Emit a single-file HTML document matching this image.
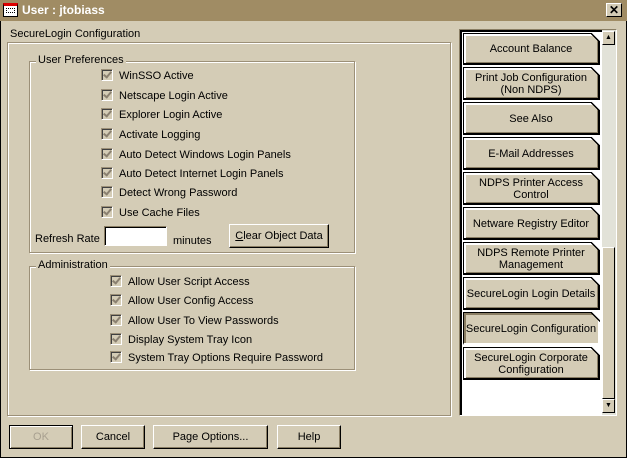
<!DOCTYPE html>
<html><head><style>
*{margin:0;padding:0;box-sizing:border-box}
body{width:627px;height:458px;background:#d4ccb6;font-family:"Liberation Sans",sans-serif;font-size:11px;color:#000;position:relative;overflow:hidden}
.a{position:absolute;white-space:nowrap}
.t{padding-top:1px}
.win{position:absolute;left:0;top:0;width:627px;height:458px;border:1px solid #000;border-top:none}
.title{position:absolute;left:0;top:0;width:627px;height:21px;background:#a08c64;color:#fff;font-weight:bold;font-size:12px}
.etch{position:absolute;border:1px solid #9c9078;box-shadow:1px 1px 0 #fff, inset 1px 1px 0 #fff}
.grp{position:absolute;border:1px solid #9c9078;box-shadow:1px 1px 0 #fff, inset 1px 1px 0 #fff}
.lg{position:absolute;background:#d4ccb6;padding:0 2px;top:-8px;left:6px}
.cb{position:absolute;width:12px;height:12px;background:#d4ccb6;border:1px solid;border-color:#9c9078 #fff #fff #9c9078;box-shadow:inset 1px 1px 0 #404040}
.cb:after{content:"";position:absolute;left:3px;top:0px;width:3px;height:6px;border:solid #8a8070;border-width:0 2px 2px 0;transform:rotate(40deg)}
.btn{position:absolute;border:1px solid;border-color:#fff #000 #000 #fff;box-shadow:inset -1px -1px 0 #8a7e64;text-align:center;line-height:22px;background:#d4ccb6}
.tab{position:absolute;left:463px;width:137px;border:1px solid #000;border-right:2px solid #000;border-bottom:2px solid #000;box-shadow:inset 2px 2px 0 #fff,inset -1px -1px 0 #8a7e64;background:#d4ccb6;text-align:center;line-height:12px;display:flex;align-items:center;justify-content:center;padding-top:1px}
.tab:after{content:"";position:absolute;right:-2px;top:-1px;width:10px;height:10px;background:linear-gradient(45deg,transparent 48%,#000 48%,#000 58%,#fff 58%)}
.tab.sel{box-shadow:inset 2px 2px 0 #8a7e64;border-color:#000 #fff #fff #000}
</style></head><body>
<div class="win"></div>
<div class="title">
 <div class="a" style="left:3px;top:3px;width:15px;height:14px;background:#fff;border:1px solid #000;border-top:3px solid #d00"><div class="a" style="left:2px;top:2px;width:9px;height:5px;border:1px dotted #000"></div></div>
 <div class="a" style="left:22px;top:3px">User : jtobiass</div>
 <div class="a" style="left:606px;top:3px;width:16px;height:14px;background:#d4ccb6;border:1px solid;border-color:#fff #000 #000 #fff;color:#000;text-align:center;line-height:12px;font-size:12px">✕</div>
</div>
<div class="a t" style="left:10px;top:27px">SecureLogin Configuration</div>
<div class="etch" style="left:7px;top:42px;width:444px;height:374px"></div>

<div class="grp" style="left:29px;top:61px;width:326px;height:192px"><div class="lg t">User Preferences</div></div>
<div class="cb" style="left:101px;top:69px"></div><div class="a t" style="left:119px;top:69px">WinSSO Active</div>
<div class="cb" style="left:101px;top:89px"></div><div class="a t" style="left:119px;top:89px">Netscape Login Active</div>
<div class="cb" style="left:101px;top:108px"></div><div class="a t" style="left:119px;top:108px">Explorer Login Active</div>
<div class="cb" style="left:101px;top:128px"></div><div class="a t" style="left:119px;top:128px">Activate Logging</div>
<div class="cb" style="left:101px;top:148px"></div><div class="a t" style="left:119px;top:148px">Auto Detect Windows Login Panels</div>
<div class="cb" style="left:101px;top:167px"></div><div class="a t" style="left:119px;top:167px">Auto Detect Internet Login Panels</div>
<div class="cb" style="left:101px;top:186px"></div><div class="a t" style="left:119px;top:186px">Detect Wrong Password</div>
<div class="cb" style="left:101px;top:206px"></div><div class="a t" style="left:119px;top:206px">Use Cache Files</div>
<div class="a t" style="left:35px;top:232px">Refresh Rate</div>
<div class="a" style="left:104px;top:226px;width:63px;height:20px;background:#fff;border:1px solid;border-color:#8a7e64 #fff #fff #8a7e64;box-shadow:inset 1px 1px 0 #000"></div>
<div class="a t" style="left:173px;top:234px">minutes</div>
<div class="btn" style="left:229px;top:224px;width:100px;height:24px"><u>C</u>lear Object Data</div>

<div class="grp" style="left:29px;top:266px;width:326px;height:104px"><div class="lg t">Administration</div></div>
<div class="cb" style="left:110px;top:275px"></div><div class="a t" style="left:128px;top:275px">Allow User Script Access</div>
<div class="cb" style="left:110px;top:294px"></div><div class="a t" style="left:128px;top:294px">Allow User Config Access</div>
<div class="cb" style="left:110px;top:314px"></div><div class="a t" style="left:128px;top:314px">Allow User To View Passwords</div>
<div class="cb" style="left:110px;top:333px"></div><div class="a t" style="left:128px;top:333px">Display System Tray Icon</div>
<div class="cb" style="left:110px;top:351px"></div><div class="a t" style="left:128px;top:351px">System Tray Options Require Password</div>

<div class="a" style="left:459px;top:29px;width:158px;height:387px;border:1px solid;border-color:#8a7e64 #fff #fff #8a7e64"></div>
<div class="a" style="left:460px;top:30px;width:142px;height:385px;background:#fff;border-left:2px solid #000;border-top:2px solid #000"></div>
<div class="a" style="left:602px;top:30px;width:14px;height:385px;background:#e2e2d8"></div>
<div class="a" style="left:602px;top:31px;width:13px;height:14px;background:#d4ccb6;border:1px solid;border-color:#fff #000 #000 #fff;font-size:7px;text-align:center;line-height:11px">▲</div>
<div class="a" style="left:602px;top:247px;width:13px;height:152px;background:#d4ccb6;border:1px solid;border-color:#fff #000 #000 #fff"></div>
<div class="a" style="left:602px;top:399px;width:13px;height:14px;background:#d4ccb6;border:1px solid;border-color:#fff #000 #000 #fff;font-size:7px;text-align:center;line-height:11px">▼</div>

<div class="tab" style="top:33px;height:32px">Account Balance</div>
<div class="tab" style="top:67px;height:33px">Print Job Configuration<br>(Non NDPS)</div>
<div class="tab" style="top:102px;height:33px">See Also</div>
<div class="tab" style="top:137px;height:33px">E-Mail Addresses</div>
<div class="tab" style="top:172px;height:33px">NDPS Printer Access<br>Control</div>
<div class="tab" style="top:207px;height:33px">Netware Registry Editor</div>
<div class="tab" style="top:242px;height:33px">NDPS Remote Printer<br>Management</div>
<div class="tab" style="top:277px;height:33px">SecureLogin Login Details</div>
<div class="tab sel" style="top:312px;height:33px">SecureLogin Configuration</div>
<div class="tab" style="top:347px;height:33px">SecureLogin Corporate<br>Configuration</div>

<div class="btn" style="left:9px;top:425px;width:64px;height:24px;color:#a8a090;border:1px solid #000;box-shadow:inset 1px 1px 0 #fff,inset -1px -1px 0 #8a7e64">OK</div>
<div class="btn" style="left:81px;top:425px;width:64px;height:24px">Cancel</div>
<div class="btn" style="left:153px;top:425px;width:115px;height:24px">Page Options...</div>
<div class="btn" style="left:277px;top:425px;width:64px;height:24px">Help</div>
</body></html>
